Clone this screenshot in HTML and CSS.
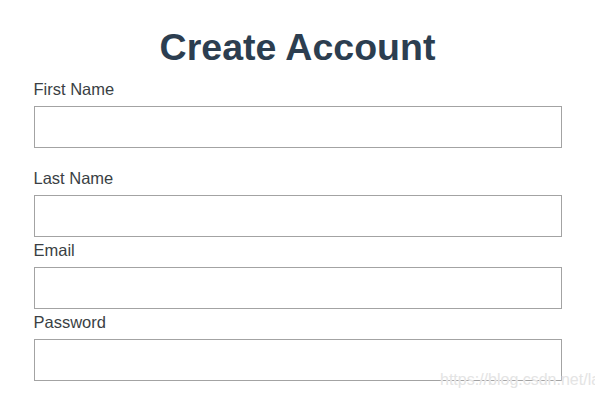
FILE: index.html
```html
<!DOCTYPE html>
<html lang="en">
<head>
  <meta charset="UTF-8" />
  <meta name="viewport" content="width=device-width, initial-scale=1" />
  <title>Create Account</title>
  <link rel="stylesheet" href="styles.css">
</head>
<body>
  <!-- Signup form -->
  <div class="signup">
    <h1 class="title">Create Account</h1>
    <form class="form">
      <div class="field field-first">
        <label for="firstName">First Name</label>
        <input type="text" id="firstName" />
      </div>
      <div class="field">
        <label for="lastName">Last Name</label>
        <input type="text" id="lastName" />
      </div>
      <div class="field">
        <label for="email">Email</label>
        <input type="email" id="email" />
      </div>
      <div class="field">
        <label for="password">Password</label>
        <input type="password" id="password" />
      </div>
    </form>
  </div>

  <div class="watermark">https://blog.csdn.net/la</div>
</body>
</html>
```

FILE: styles.css
```css
* {
  box-sizing: border-box;
}

html, body {
  margin: 0;
  background: #fff;
  overflow: hidden;
}

body {
  font-family: 'Liberation Sans', Arial, sans-serif;
  position: relative;
  min-height: 420px;
}

.signup {
  width: 528px;
  margin: 0 auto;
  padding-top: 25px;
}

.title {
  margin: 0 0 10px;
  font-size: 37.5px;
  line-height: 44px;
  font-weight: bold;
  text-align: center;
  color: #2c3e50;
}

.field label {
  display: block;
  font-size: 16.5px;
  line-height: 18px;
  color: #3a3f44;
  padding-top: 1px;
  margin-bottom: 8px;
}

.field input {
  display: block;
  width: 100%;
  height: 42px;
  margin: 0 0 3px;
  padding: 0 10px;
  border: 1px solid #a3a3a3;
  border-radius: 0;
  font-size: 16px;
  outline: none;
}

.field-first input {
  margin-bottom: 20px;
}

/* faint blog watermark */
.watermark {
  position: absolute;
  left: 440px;
  top: 370px;
  font-size: 16px;
  line-height: 20px;
  white-space: nowrap;
  color: #e4e4e4;
  text-shadow: 0 0 1px #fff;
}
```
